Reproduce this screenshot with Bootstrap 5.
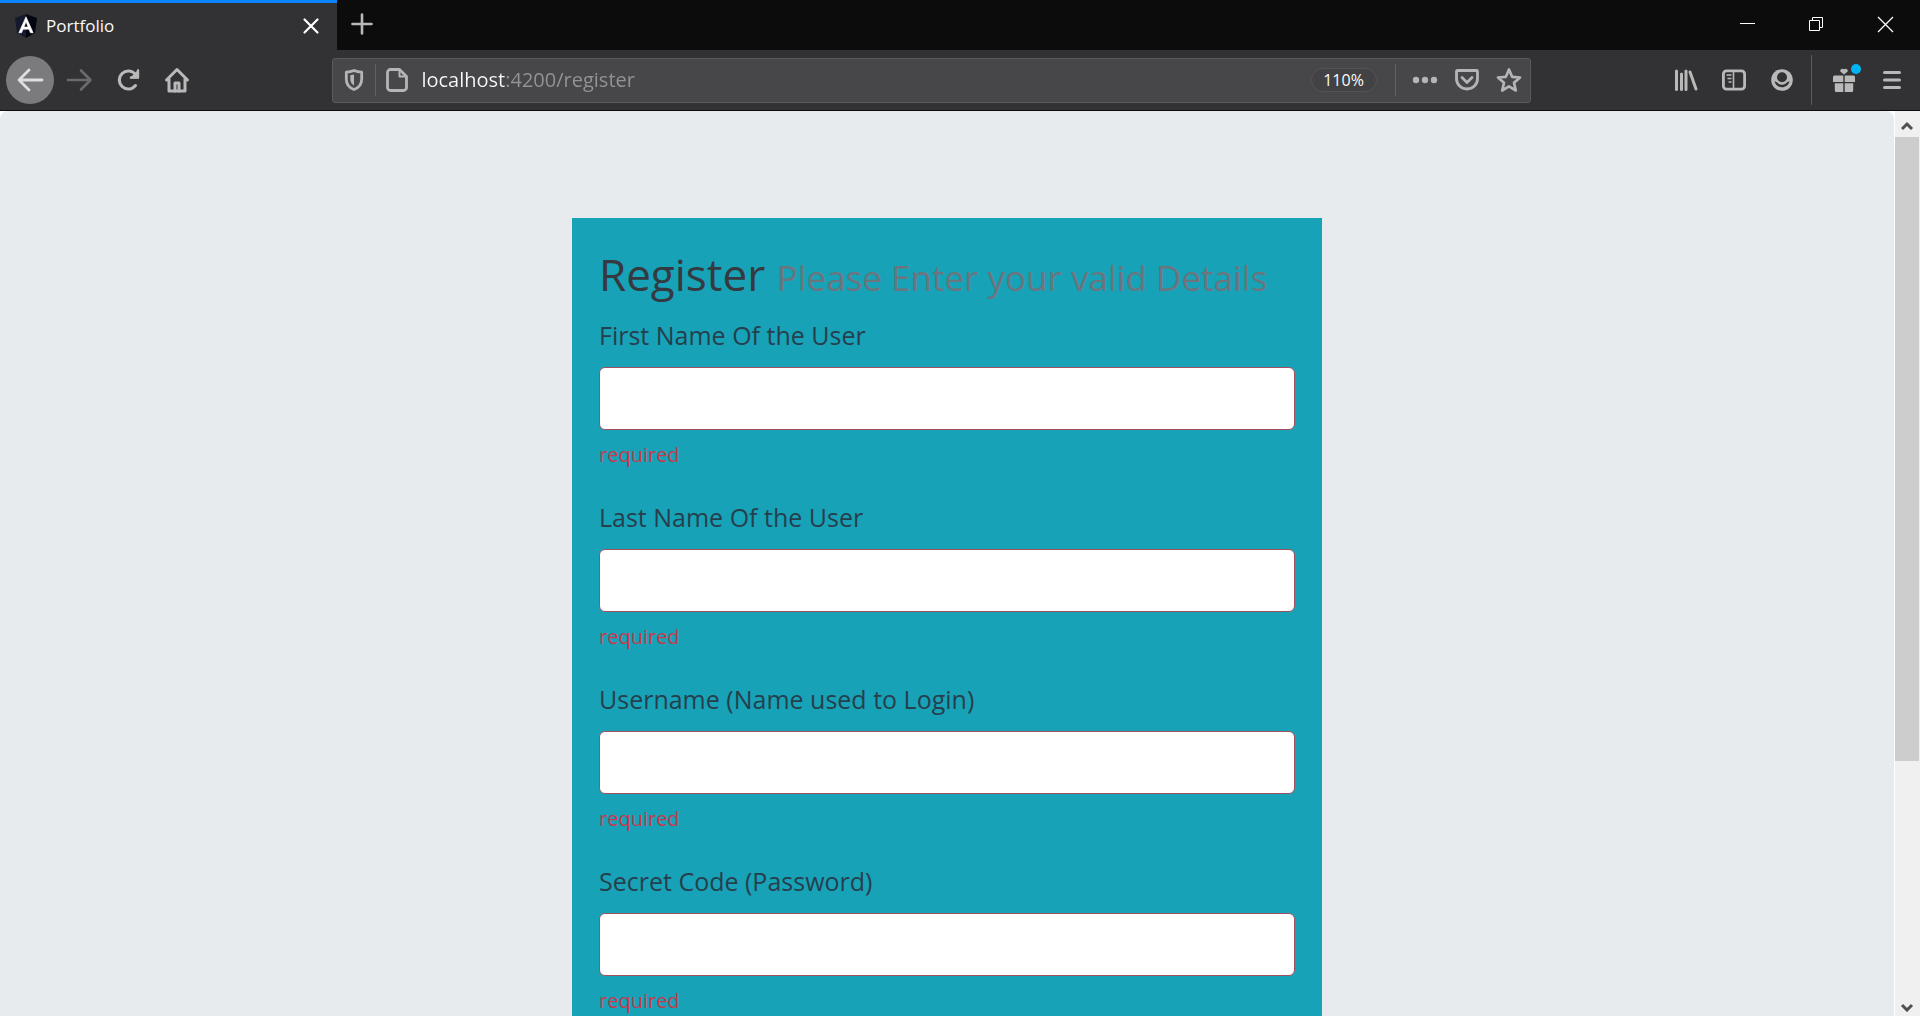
<!DOCTYPE html>
<html lang="en">
<head>
<meta charset="utf-8">
<meta name="viewport" content="width=device-width, initial-scale=1">
<title>Portfolio</title>
<link href="https://cdn.jsdelivr.net/npm/bootstrap@5.3.0/dist/css/bootstrap.min.css" rel="stylesheet">
<style>
  body { font-family: "Open Sans", "Noto Sans", sans-serif; }

  /* browser frame */
  .tab-strip { height: 50px; background: #0c0c0d; padding-bottom: 2px; }
  .page-tab { width: 337px; height: 50px; background: #323234; border-top: 3px solid #0a84ff; color: #f9f9fa; font-size: 17px; padding: 0 14px 2px; }
  .frame-btn { border: 0; background: none; padding: 0; color: #b9b9ba; display: flex; align-items: center; justify-content: center; flex: none; }
  .new-tab { width: 50px; }
  .window-btn { width: 69px; color: #fff; }
  .tool-strip { height: 61px; background: #323234; border-bottom: 1px solid #0c0c0d; padding: 0 4px 0 6px; }
  .tool-nav { gap: 1px; }
  .tool-btn { width: 48px; height: 48px; }
  .back-btn { background: #7b7b7d; border-radius: 50%; color: #dededf; }
  .forward-btn { color: #6a6a6c; }
  .tool-gap { flex: 10 1 0; }
  .address-box { flex: 91 1 0; min-width: 0; height: 45px; background: #474749; border: 1px solid #5a5a5c; border-radius: 3px; color: #b5b5b6; }
  .address-box .frame-btn { width: 42px; height: 42px; color: #b5b5b6; }
  .address-rule { width: 1px; height: 32px; background: #626264; flex: none; }
  .tool-rule { width: 1px; height: 50px; background: #5c5c5e; margin: 0 8px 0 5px; flex: none; }
  .address-input { border: 0; outline: 0; padding: 0; margin-left: 3px; min-width: 0; font-size: 20px; line-height: 28px; color: transparent;
    background: linear-gradient(90deg, #f9f9fa 84px, #949496 84px); -webkit-background-clip: text; background-clip: text; }
  .address-box .zoom-pill { width: 66px; height: 24px; border: 1px solid #535355; border-radius: 12px; background: #424244; color: #f9f9fa; font-size: 16px; margin-right: 18px; }
  .news-dot { width: 10px; height: 10px; background: #00b3f4; border-radius: 50%; top: 8px; right: 7px; }

  /* page */
  .page-view { background: #e7ebee; border-radius: 8px 8px 0 0; padding-top: 107px; }
  .register-panel { max-width: 750px; background: #18a2b8; padding: 26px 27px; color: #343a40; }
  .register-title { font-size: 44px; line-height: 60px; margin-bottom: 7px; font-weight: 400; white-space: nowrap; }
  .register-title span { font-size: 35px; color: #6c757d; }
  .field-group { margin-bottom: 27px; }
  .field-label { display: block; font-size: 25px; line-height: 40px; margin-bottom: 12px; color: #263f4c; }
  .register-panel .form-control { height: 63px; font-size: 25px; border: 1px solid #a0505f; border-radius: 6px; background: #fff; }
  .field-error { font-size: 20px; line-height: 30px; margin-top: 10px; color: #c8374c; }

  .scroll-rail { width: 26px; background: #f0f0f0; border-left: 1px solid #fff; padding-right: 1px; color: #505050; }
  .scroll-rail .frame-btn { height: 26px; padding-top: 4px; color: #505050; }
  .scroll-thumb { flex: 624 1 0; background: #cdcdcd; }
  .scroll-rest { flex: 229 1 0; }
</style>
<script src="https://cdn.jsdelivr.net/npm/bootstrap@5.3.0/dist/js/bootstrap.bundle.min.js"></script>
</head>
<body class="vh-100 d-flex flex-column overflow-hidden bg-white">

<header class="flex-shrink-0">
  <div class="tab-strip d-flex">
    <div class="page-tab d-flex align-items-center">
      <svg width="24" height="24" viewBox="0 0 24 24" aria-hidden="true"><path d="M12 0 1 4l2 15 9 5z" fill="#14192b"/><path d="M12 0l11 4-2 15-9 5z" fill="#03050f"/><path d="M12 2.800 4.800 18.800h2.800l1.400-3.600h6l1.400 3.600h2.800zM12 7.800l2.100 5.200H9.900z" fill="#fff" fill-rule="evenodd" stroke="#fff" stroke-width=".6"/></svg>
      <span class="flex-grow-1 ms-2">Portfolio</span>
      <button class="frame-btn text-white" type="button" aria-label="Close tab"><svg width="24" height="24" viewBox="0 0 24 24" fill="none" stroke="currentColor" stroke-width="2.200" stroke-linecap="round"><path d="M5.500 5.500l13 13M18.500 5.500l-13 13"/></svg></button>
    </div>
    <button class="frame-btn new-tab" type="button" aria-label="New tab"><svg width="24" height="24" viewBox="0 0 24 24" fill="none" stroke="currentColor" stroke-width="2.600" stroke-linecap="round"><path d="M12 2.500v19M2.500 12h19"/></svg></button>
    <div class="d-flex ms-auto">
      <button class="frame-btn window-btn" type="button" aria-label="Minimize"><svg width="17" height="17" viewBox="0 0 17 17" fill="none" stroke="currentColor"><path d="M1 7.500h15"/></svg></button>
      <button class="frame-btn window-btn" type="button" aria-label="Restore"><svg width="17" height="17" viewBox="0 0 17 17" fill="none" stroke="currentColor"><path d="M1.500 4.500h10v10h-10zM4.500 4.500v-3h10v10h-3"/></svg></button>
      <button class="frame-btn window-btn" type="button" aria-label="Close window"><svg width="17" height="17" viewBox="0 0 17 17" fill="none" stroke="currentColor" stroke-width="1.300"><path d="M1 1l15 15M16 1L1 16"/></svg></button>
    </div>
  </div>

  <div class="tool-strip d-flex align-items-center">
    <nav class="tool-nav d-flex" aria-label="Browser navigation">
      <button class="frame-btn tool-btn back-btn" type="button" aria-label="Back"><svg width="30" height="30" viewBox="0 0 30 30" fill="none" stroke="currentColor" stroke-width="2.800" stroke-linecap="round" stroke-linejoin="round"><path d="M27 15H4M14 5 4 15l10 10"/></svg></button>
      <button class="frame-btn tool-btn forward-btn" type="button" aria-label="Forward"><svg width="30" height="30" viewBox="0 0 30 30" fill="none" stroke="currentColor" stroke-width="2.600" stroke-linecap="round" stroke-linejoin="round"><path d="M4 15h22M17 5.500 26.500 15 17 24.500"/></svg></button>
      <button class="frame-btn tool-btn" type="button" aria-label="Reload"><svg width="28" height="28" viewBox="0 0 28 28" fill="none" stroke="currentColor" stroke-width="3"><path d="M21.500 19.500A9 9 0 1 1 21.500 8.500" stroke-linecap="round"/><path d="M25 3v9.500h-9.500z" fill="currentColor" stroke="none"/><path d="M24 4.500v7h-7" stroke-width="2.400" stroke-linecap="round" stroke-linejoin="round"/></svg></button>
      <button class="frame-btn tool-btn" type="button" aria-label="Home"><svg width="26" height="26" viewBox="0 0 26 26" fill="none" stroke="currentColor" stroke-width="3" stroke-linecap="round" stroke-linejoin="round"><path d="M2.500 13 13 2.500 23.500 13M5 12v12h16V12"/><path d="M11 24v-8h4v8" stroke-width="3"/></svg></button>
    </nav>
    <div class="tool-gap"></div>
    <div class="address-box d-flex align-items-center">
      <button class="frame-btn" type="button" aria-label="Tracking protection"><svg width="24" height="24" viewBox="0 0 24 24" fill="none" stroke="currentColor" stroke-width="2.800" stroke-linejoin="round"><path d="M12 2.500c-2.500 1-5 1.500-7.700 1.700V11c0 5 3 8.800 7.700 10.500 4.700-1.700 7.700-5.500 7.700-10.500V4.200C17 4 14.500 3.500 12 2.500z"/><path d="M12 6.500v11c-2.500-1.500-3.700-3.700-3.700-6.500V7.300z" fill="currentColor" stroke="none"/></svg></button>
      <span class="address-rule"></span>
      <button class="frame-btn" type="button" aria-label="Site information"><svg width="24" height="26" viewBox="0 0 24 26" fill="none" stroke="currentColor" stroke-width="2.800" stroke-linejoin="round"><path d="M14.500 2.500H5.500a3 3 0 0 0-3 3v15a3 3 0 0 0 3 3h13a3 3 0 0 0 3-3V9.500z"/><path d="M14.500 2.500v7h7" stroke-width="2"/></svg></button>
      <input class="address-input flex-grow-1" type="text" value="localhost:4200/register" aria-label="Address">
      <button class="frame-btn zoom-pill" type="button">110%</button>
      <span class="address-rule me-2"></span>
      <button class="frame-btn" type="button" aria-label="Page actions"><svg width="26" height="8" viewBox="0 0 26 8" fill="currentColor"><circle cx="4" cy="4" r="3.200"/><circle cx="13" cy="4" r="3.200"/><circle cx="22" cy="4" r="3.200"/></svg></button>
      <button class="frame-btn" type="button" aria-label="Save to Pocket"><svg width="26" height="24" viewBox="0 0 26 24" fill="none" stroke="currentColor" stroke-width="2.800" stroke-linecap="round" stroke-linejoin="round"><path d="M3.500 2.500h19a1 1 0 0 1 1 1V11a10.500 10 0 0 1-21 0V3.500a1 1 0 0 1 1-1z"/><path d="M8 9.500l5 5 5-5"/></svg></button>
      <button class="frame-btn" type="button" aria-label="Bookmark"><svg width="26" height="26" viewBox="0 0 26 26" fill="none" stroke="currentColor" stroke-width="2.700" stroke-linejoin="round"><path d="M13 2.500l3.100 7.300 7.900.7-6 5.200 1.800 7.800L13 19.400l-6.800 4.100L8 15.700l-6-5.200 7.900-.7z"/></svg></button>
    </div>
    <div class="tool-gap"></div>
    <div class="d-flex align-items-center">
      <button class="frame-btn tool-btn" type="button" aria-label="Library"><svg width="24" height="24" viewBox="0 0 24 24" fill="none" stroke="currentColor" stroke-width="3" stroke-linecap="round"><path d="M2.500 3v18.500M7.500 6v15.500M12 3v18.500M16 4l6 17"/></svg></button>
      <button class="frame-btn tool-btn" type="button" aria-label="Sidebars"><svg width="26" height="24" viewBox="0 0 26 24" fill="none" stroke="currentColor" stroke-width="2.800"><rect x="2.400" y="2.900" width="21.200" height="18.200" rx="3"/><path d="M12.500 3v18" stroke-width="1.600"/><path d="M5.500 7h5M6.500 10.500h4M7.500 14h3" stroke-width="1.500"/></svg></button>
      <button class="frame-btn tool-btn" type="button" aria-label="Account"><svg width="24" height="24" viewBox="0 0 24 24"><circle cx="12" cy="12" r="10.800" fill="currentColor"/><circle cx="12" cy="9.300" r="5" fill="#323234"/><path d="M4.500 13.200c1 .2 2 .6 2.700 1.300 2.700 3 6.900 3 9.600 0 .7-.7 1.700-1.100 2.700-1.300-.8 3.800-3.800 6-7.500 6s-6.700-2.200-7.500-6z" fill="#323234"/></svg></button>
      <span class="tool-rule"></span>
      <button class="frame-btn tool-btn position-relative" type="button" aria-label="What's new"><svg width="24" height="26" viewBox="0 0 24 26" fill="currentColor"><path d="M12 7.500 8.300 4.500A2.300 2.300 0 0 1 12 2.200a2.300 2.300 0 0 1 3.700 2.300zM2.500 8.500H11.300V15H1V10a1.500 1.500 0 0 1 1.500-1.500zM12.700 8.500h8.800A1.500 1.500 0 0 1 23 10v5H12.700zM2.800 16.200h8.500V25H4.300a1.500 1.500 0 0 1-1.500-1.500zM12.700 16.200h8.500v7.300a1.500 1.500 0 0 1-1.500 1.500h-7z"/></svg><span class="news-dot position-absolute"></span></button>
      <button class="frame-btn tool-btn" type="button" aria-label="Menu"><svg width="20" height="22" viewBox="0 0 20 22" fill="none" stroke="currentColor" stroke-width="3" stroke-linecap="round"><path d="M2.500 3.500h15M2.500 11h15M2.500 18.500h15"/></svg></button>
    </div>
  </div>
</header>

<div class="d-flex flex-grow-1 overflow-hidden">
  <main class="page-view flex-grow-1 overflow-hidden">
    <form class="register-panel mx-auto">
      <h1 class="register-title">Register <span>Please Enter your valid Details</span></h1>
      <div class="field-group">
        <label class="field-label" for="firstName">First Name Of the User</label>
        <input class="form-control" id="firstName" type="text" aria-describedby="firstNameError">
        <div class="field-error" id="firstNameError">required</div>
      </div>
      <div class="field-group">
        <label class="field-label" for="lastName">Last Name Of the User</label>
        <input class="form-control" id="lastName" type="text" aria-describedby="lastNameError">
        <div class="field-error" id="lastNameError">required</div>
      </div>
      <div class="field-group">
        <label class="field-label" for="username">Username (Name used to Login)</label>
        <input class="form-control" id="username" type="text" aria-describedby="usernameError">
        <div class="field-error" id="usernameError">required</div>
      </div>
      <div class="field-group">
        <label class="field-label" for="password">Secret Code (Password)</label>
        <input class="form-control" id="password" type="password" aria-describedby="passwordError">
        <div class="field-error" id="passwordError">required</div>
      </div>
    </form>
  </main>
  <div class="scroll-rail d-flex flex-column flex-shrink-0">
    <button class="frame-btn" type="button" aria-label="Scroll up"><svg width="14" height="14" viewBox="0 0 14 14" fill="none" stroke="currentColor" stroke-width="3"><path d="M2 10l5-5 5 5"/></svg></button>
    <div class="scroll-thumb"></div>
    <div class="scroll-rest"></div>
    <button class="frame-btn" type="button" aria-label="Scroll down"><svg width="14" height="14" viewBox="0 0 14 14" fill="none" stroke="currentColor" stroke-width="3"><path d="M2 7l5 5 5-5"/></svg></button>
  </div>
</div>
</body>
</html>
